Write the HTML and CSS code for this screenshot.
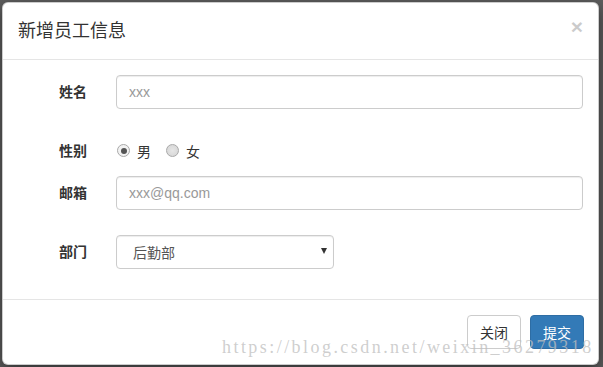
FILE: index.html
```html
<!DOCTYPE html>
<html lang="zh-CN">
<head>
<meta charset="utf-8">
<title>新增员工信息</title>
<link rel="stylesheet" href="styles.css">
</head>
<body>
<div class="modal">
  <div class="modal-header">
    <span class="close">×</span>
    <h4 class="modal-title">新增员工信息</h4>
  </div>
  <div class="modal-body">
    <div class="form-group gap-lg">
      <label class="control-label">姓名</label>
      <div class="form-control"><span class="placeholder">xxx</span></div>
    </div>
    <div class="form-group gap-sm">
      <label class="control-label">性别</label>
      <div class="radios">
        <label class="radio-inline"><span class="radio checked"></span>男</label>
        <label class="radio-inline"><span class="radio"></span>女</label>
      </div>
    </div>
    <div class="form-group gap-lg">
      <label class="control-label">邮箱</label>
      <div class="form-control"><span class="placeholder">xxx@qq.com</span></div>
    </div>
    <div class="form-group gap-sm">
      <label class="control-label">部门</label>
      <div class="select"><span>后勤部</span><span class="caret"></span></div>
    </div>
  </div>
  <div class="modal-footer">
    <button class="btn btn-default">关闭</button>
    <button class="btn btn-primary">提交</button>
  </div>
</div>
<div class="watermark">https://blog.csdn.net/weixin_36279318</div>
</body>
</html>
```

FILE: styles.css
```css
html, body {
  margin: 0;
  padding: 0;
}
body {
  background: #5e5e5e;
  width: 603px;
  height: 367px;
  overflow: hidden;
  position: relative;
  font-family: "Noto Sans CJK SC", "Liberation Sans", sans-serif;
  font-size: 14px;
  line-height: 20px;
  color: #333;
}
.modal {
  margin: 2px 0 0 2px;
  width: 597px;
  box-sizing: border-box;
  background: #fff;
  border: 1px solid rgba(0, 0, 0, 0.2);
  border-radius: 6px;
  box-shadow: 0 5px 15px rgba(0, 0, 0, 0.5);
}
.modal-header {
  padding: 15px;
  border-bottom: 1px solid #e5e5e5;
  height: 26px;
}
.modal-title {
  margin: -2px 0 0 0;
  font-size: 18px;
  font-weight: normal;
  line-height: 26px;
  color: #333;
}
.close {
  float: right;
  margin-top: -4px;
  font-family: "Liberation Sans", sans-serif;
  font-size: 21px;
  font-weight: bold;
  line-height: 26px;
  color: #000;
  opacity: 0.2;
}
.modal-body {
  padding: 15px;
}
.form-group {
  display: grid;
  grid-template-columns: 98px 1fr;
  align-items: start;
}
.gap-lg {
  margin-bottom: 25px;
}
.gap-sm {
  margin-bottom: 15px;
}
.control-label {
  padding: 6px 0 0 41px;
  font-weight: bold;
  line-height: 20px;
  color: #333;
}
.form-control {
  box-sizing: border-box;
  height: 34px;
  padding: 6px 12px;
  border: 1px solid #ccc;
  border-radius: 4px;
  box-shadow: inset 0 1px 1px rgba(0, 0, 0, 0.075);
  font-family: "Liberation Sans", "Noto Sans CJK SC", sans-serif;
  font-size: 14px;
  line-height: 20px;
}
.placeholder {
  color: #999;
}
.radios {
  display: flex;
  padding-top: 6px;
  height: 21px;
}
.radio-inline {
  display: flex;
  align-items: center;
  margin-right: 14px;
  color: #333;
}
.radio {
  box-sizing: border-box;
  width: 13px;
  height: 13px;
  margin: 0 7px 0 1px;
  border-radius: 50%;
  border: 1px solid #a9a9a9;
  background: radial-gradient(circle, #e6e6e6 0%, #d4d4d4 100%);
  position: relative;
}
.radio.checked {
  background: #f2f2f2;
}
.radio.checked::after {
  content: "";
  position: absolute;
  left: 2.5px;
  top: 2.5px;
  width: 6px;
  height: 6px;
  border-radius: 50%;
  background: #555;
}
.select {
  box-sizing: border-box;
  width: 218px;
  height: 34px;
  display: flex;
  align-items: center;
  justify-content: space-between;
  padding: 0 6px 0 16px;
  border: 1px solid #ccc;
  border-radius: 4px;
  box-shadow: inset 0 1px 1px rgba(0, 0, 0, 0.075);
  color: #555;
}
.caret {
  width: 0;
  height: 0;
  border-left: 3px solid transparent;
  border-right: 3px solid transparent;
  border-top: 6px solid #333;
  margin-top: -2px;
}
.modal-footer {
  padding: 15px 14px 15px 15px;
  border-top: 1px solid #e5e5e5;
  display: flex;
  justify-content: flex-end;
  gap: 9px;
}
.btn {
  box-sizing: border-box;
  width: 54px;
  height: 34px;
  padding: 6px 0;
  border: 1px solid #ccc;
  border-radius: 4px;
  font-family: "Noto Sans CJK SC", sans-serif;
  font-size: 14px;
  line-height: 20px;
  background: #fff;
  color: #333;
}
.btn-primary {
  background: #337ab7;
  border-color: #2e6da4;
  color: #fff;
}
.watermark {
  position: absolute;
  left: 222px;
  top: 336px;
  font-family: "Liberation Serif", "DejaVu Serif", serif;
  font-size: 18px;
  letter-spacing: 2.45px;
  line-height: 22px;
  color: rgba(190, 190, 190, 0.75);
  white-space: nowrap;
}
```
